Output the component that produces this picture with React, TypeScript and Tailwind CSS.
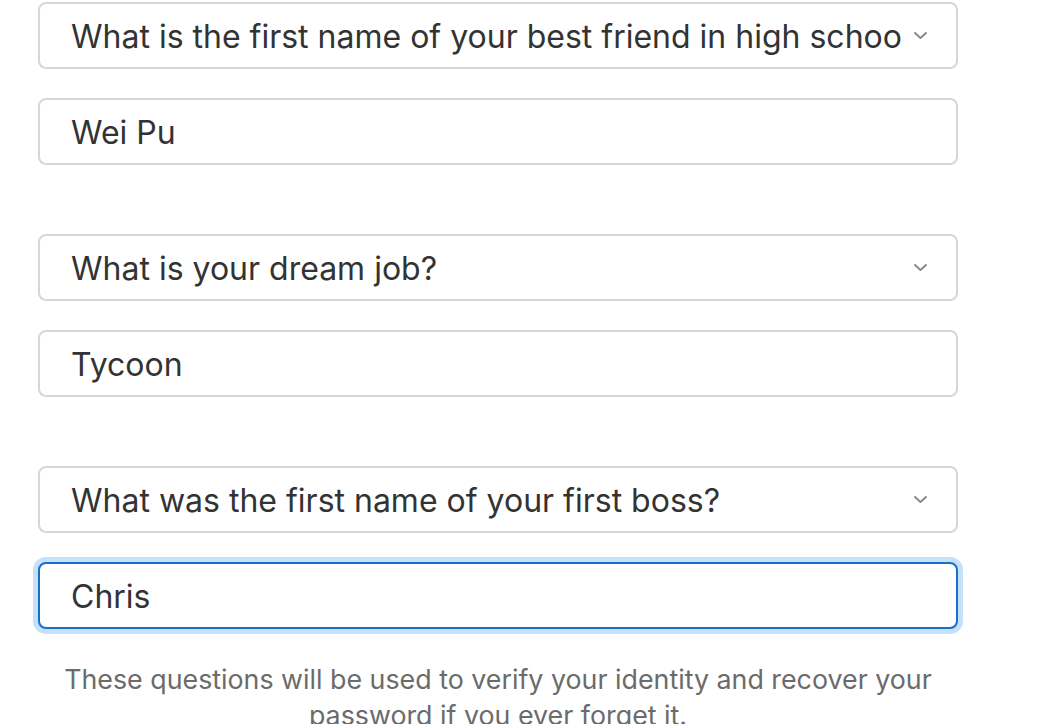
import React from "react";

const questions = [
  { q: "What is the first name of your best friend in high school?", a: "Wei Pu" },
  { q: "What is your dream job?", a: "Tycoon" },
  { q: "What was the first name of your first boss?", a: "Chris", focused: true },
];

function Chevron() {
  return (
    <svg width="15" height="9" viewBox="0 0 15 9" className="shrink-0">
      <path d="M2 2 L7.5 7 L13 2" fill="none" stroke="#8a8a8a" strokeWidth="2" strokeLinecap="round" strokeLinejoin="round" />
    </svg>
  );
}

export default function App() {
  return (
    <div className="min-h-screen bg-white font-['Inter',sans-serif] text-[#333]">
      <div className="ml-[38px] w-[920px] pt-[2px]">
        <div className="flex flex-col gap-[69px]">
          {questions.map((item) => (
            <div key={item.q} className="flex flex-col gap-[29px]">
              <div className="flex h-[67px] items-center rounded-[8px] border-2 border-[#d6d6d6] bg-white pl-[31px] pr-[28px]">
                <span className="min-w-0 flex-1 overflow-hidden whitespace-nowrap pt-[3px] text-[32px] leading-[1.35]">
                  {item.q}
                </span>
                <span className="ml-[12px] flex items-center">
                  <Chevron />
                </span>
              </div>
              <div
                className={
                  item.focused
                    ? "flex h-[67px] items-center rounded-[8px] border-2 border-[#1670c9] bg-white pl-[31px] ring-[5px] ring-[#c4e0fb]"
                    : "flex h-[67px] items-center rounded-[8px] border-2 border-[#d6d6d6] bg-white pl-[31px]"
                }
              >
                <span className="pt-[3px] text-[32px] leading-[1.35]">{item.a}</span>
              </div>
            </div>
          ))}
        </div>
        <p className="mt-[32px] text-center text-[26.8px] leading-[36px] text-[#6b6b6b]">
          These questions will be used to verify your identity and recover your password if you ever forget it.
        </p>
      </div>
    </div>
  );
}
